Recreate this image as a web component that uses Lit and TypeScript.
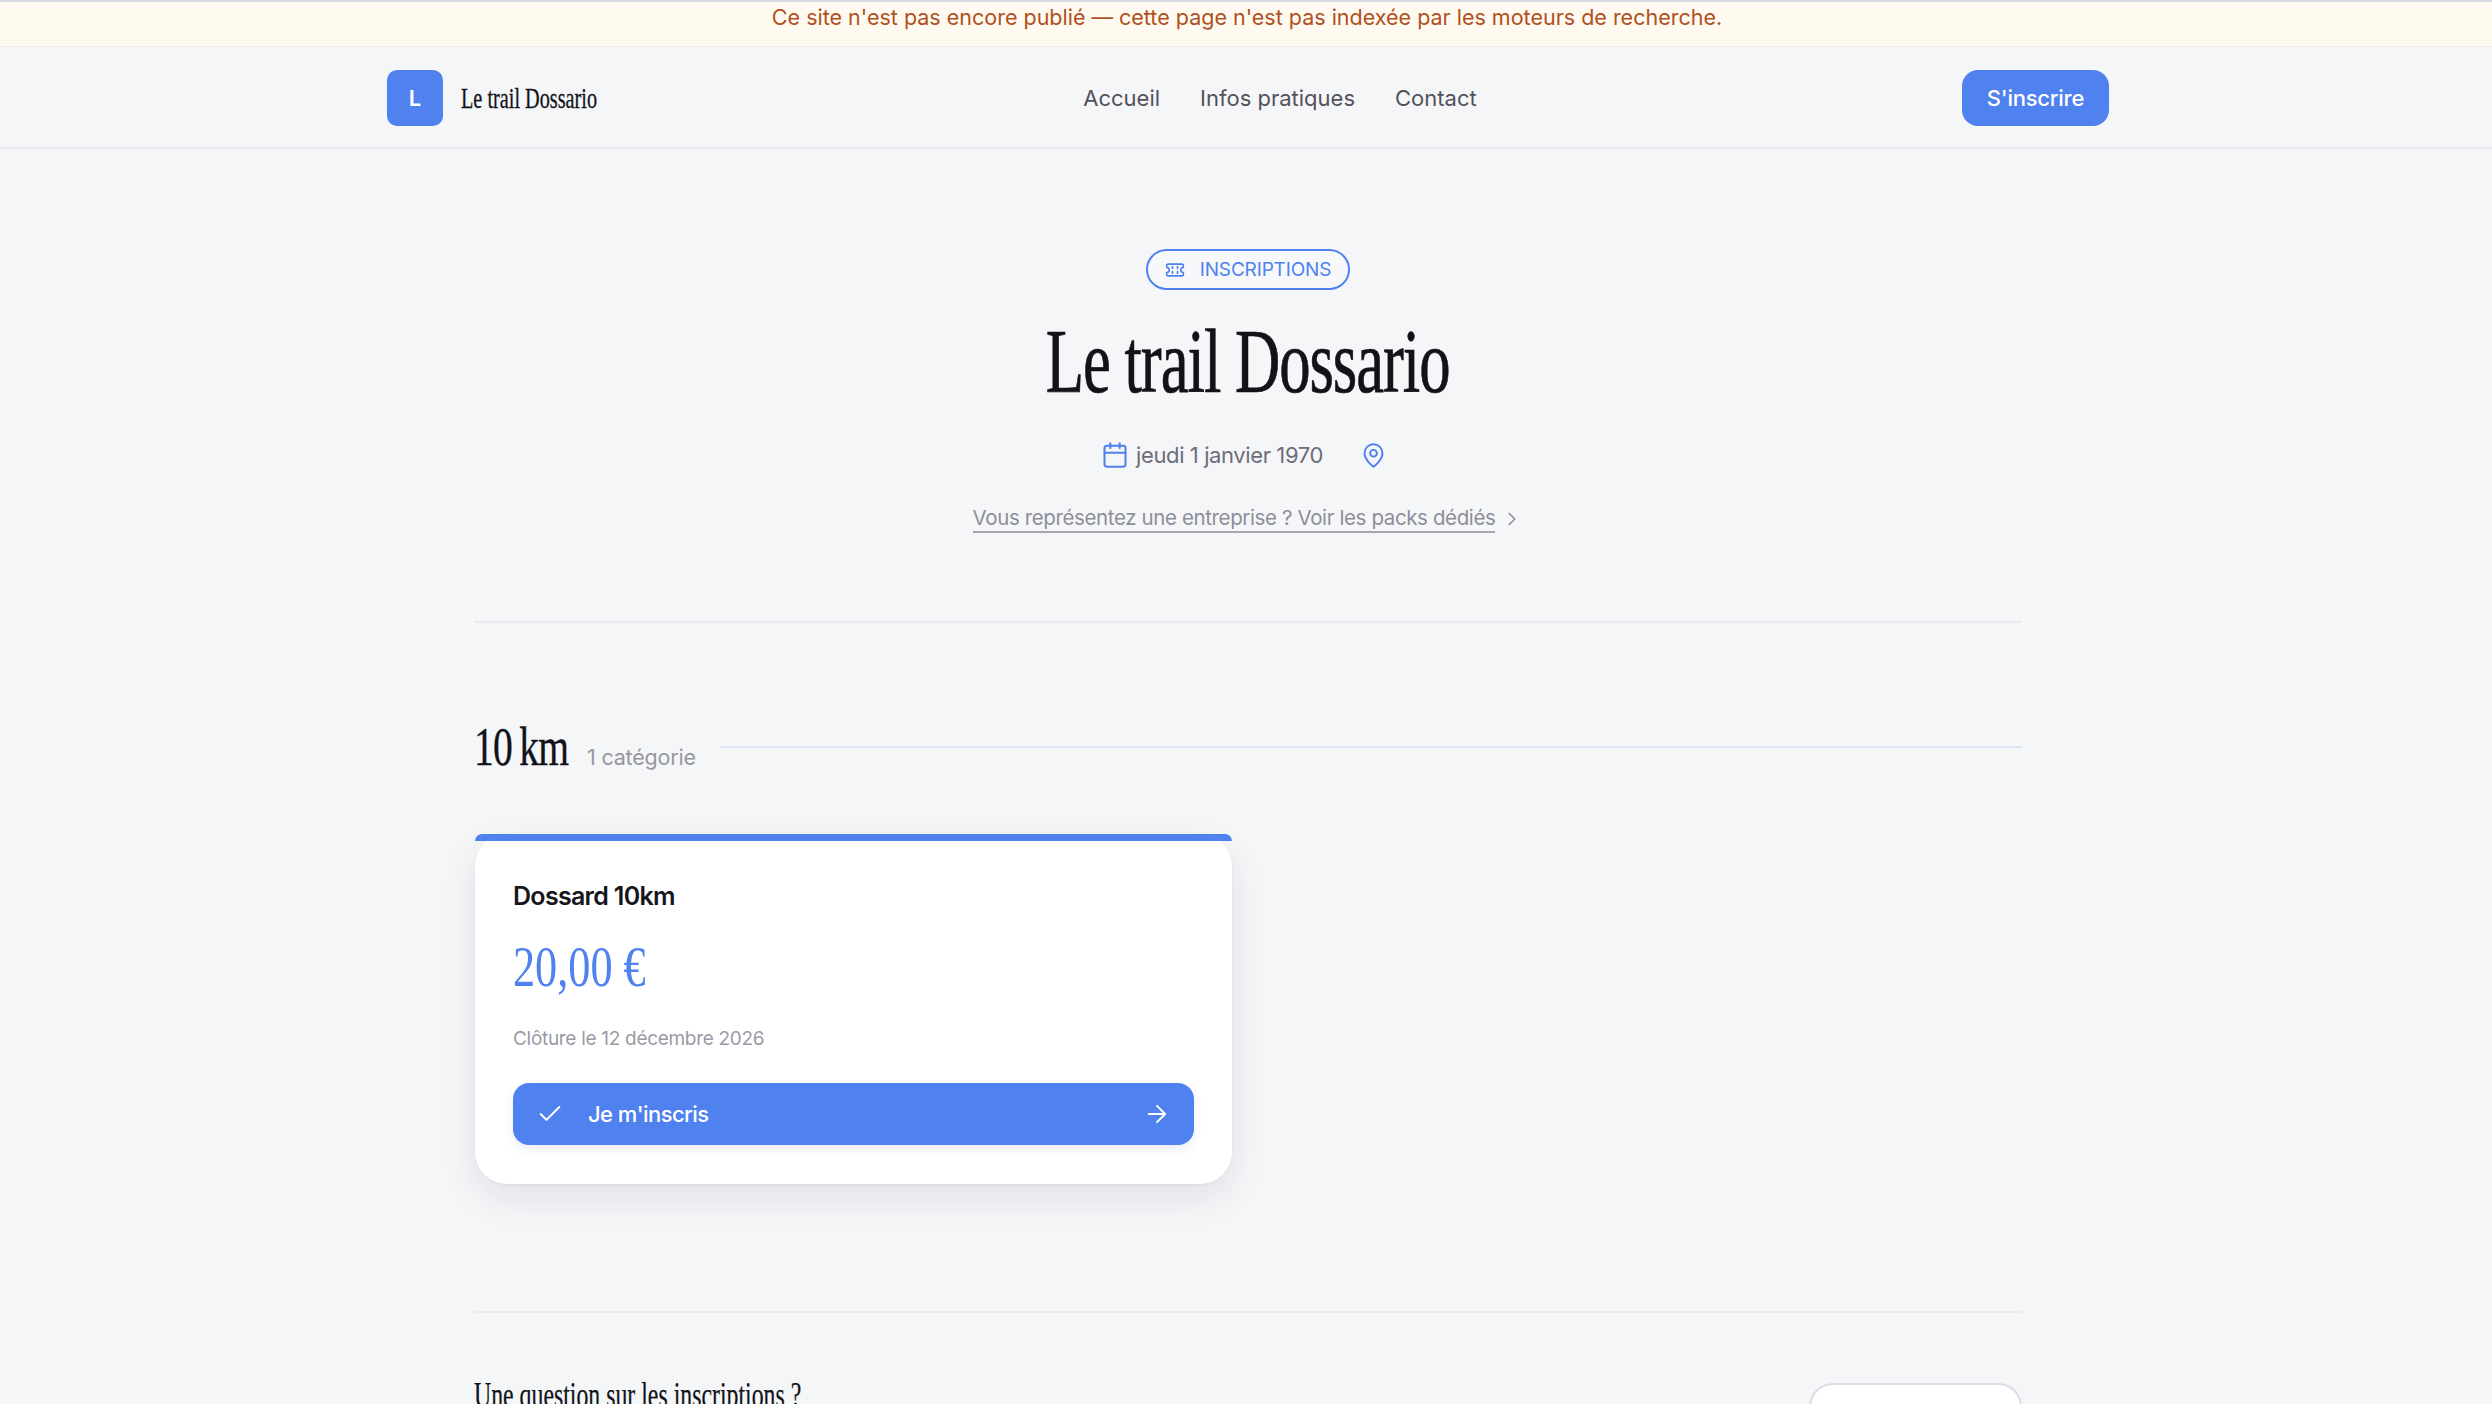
import { LitElement, html, css, svg } from "lit";
import { customElement } from "lit/decorators.js";

const icon = (cls: string, body: unknown) => html`<svg class=${cls} viewBox="0 0 24 24" fill="none" stroke="currentColor" stroke-linecap="round" stroke-linejoin="round">${body}</svg>`;
const ticket = svg`<path d="M2 9a3 3 0 0 1 0 6v2a2 2 0 0 0 2 2h16a2 2 0 0 0 2-2v-2a3 3 0 0 1 0-6V7a2 2 0 0 0-2-2H4a2 2 0 0 0-2 2Z"/><path d="M9 8v2M9 14v2M15 8v2M15 14v2"/>`;
const calendar = svg`<path d="M8 2v4M16 2v4"/><rect x="3" y="4" width="18" height="18" rx="2"/><path d="M3 10h18"/>`;
const pin = svg`<path d="M20 10c0 6-8 12-8 12s-8-6-8-12a8 8 0 0 1 16 0Z"/><circle cx="12" cy="10" r="3"/>`;
const chevron = svg`<path d="m9 18 6-6-6-6"/>`;
const check = svg`<path d="M20 6 9 17l-5-5"/>`;
const arrow = svg`<path d="M5 12h14M12 5l7 7-7 7"/>`;

@customElement("app-root")
export class AppRoot extends LitElement {
  static styles = css`
    :host { display: block; background: #f5f6f8; height: 1404px; font-family: "Inter", "Liberation Sans", sans-serif; color: #111318; overflow: hidden; }
    * { box-sizing: border-box; }
    .serif { font-family: "Liberation Serif", serif; font-weight: 400; display: inline-block; white-space: nowrap; }
    .banner { height: 47px; background: #fffaf0; border-top: 2px solid #d8dae2; border-bottom: 1px solid #eeeee8; display: flex; justify-content: center; color: #b0501f; font-size: 21.5px; line-height: 30px; letter-spacing: 0; padding-left: 2px; }
    .nav { height: 102px; border-bottom: 2px solid #e9eaee; padding: 1px 383px 0 387px; display: flex; justify-content: space-between; align-items: center; }
    .brand { display: flex; align-items: center; gap: 18px; }
    .logo { width: 56px; height: 56px; border-radius: 10px; background: #4f81ef; color: #fff; font-size: 22px; font-weight: 600; display: flex; align-items: center; justify-content: center; }
    .brand-name { width: 137px; font-size: 30px; letter-spacing: 0; transform: scaleX(0.675); transform-origin: left center; color: #111318; -webkit-text-stroke: 0.3px #111318; }
    .links { display: flex; gap: 40px; font-size: 22px; color: #52525c; letter-spacing: 0; }
    .cta { width: 147px; height: 56px; border-radius: 16px; background: #4f81ef; color: #fff; font-size: 22px; font-weight: 500; display: flex; align-items: center; justify-content: center; letter-spacing: -0.25px; }
    .page { width: 1548px; margin-left: 474px; }
    .hero { height: 474px; border-bottom: 2px solid #e9eaee; display: flex; flex-direction: column; align-items: center; padding-top: 100px; }
    .pill { width: 204px; height: 41px; border: 2px solid #4f81ef; border-radius: 21px; color: #4f81ef; display: flex; align-items: center; justify-content: center; gap: 15px; font-size: 19px; font-weight: 400; letter-spacing: -0.15px; background: #f7f8fa; }
    .i-ticket { width: 20px; height: 20px; stroke-width: 2; }
    .title { font-size: 90px; line-height: 100px; margin: 22px 0 0; transform: scaleX(0.697); letter-spacing: -1.5px; color: #111318; -webkit-text-stroke: 0.7px #111318; }
    .meta { display: flex; align-items: center; margin-top: 26px; height: 34px; font-size: 22px; color: #6d6d78; letter-spacing: -0.4px; }
    .i-cal { width: 28px; height: 28px; stroke-width: 1.75; color: #4f81ef; margin-right: 7px; }
    .i-pin { width: 27px; height: 27px; stroke-width: 1.75; color: #4f81ef; margin: 0 8px 0 37px; }
    .corp { display: flex; align-items: center; gap: 6px; margin-top: 33px; font-size: 20.5px; color: #8e8e9a; letter-spacing: -0.38px; }
    .corp span { border-bottom: 2px solid #a6a6b0; line-height: 26px; }
    .i-chev { width: 22px; height: 22px; stroke-width: 1.8; }
    .sec-head { display: flex; align-items: center; margin-top: 94px; height: 60px; }
    .sec-title { font-size: 55px; line-height: 60px; width: 95px; margin: 0; letter-spacing: -1px; word-spacing: -3px; transform: scaleX(0.72); transform-origin: left center; -webkit-text-stroke: 0.4px #111318; }
    .sec-sub { margin-left: 18px; font-size: 21.5px; color: #9696a2; letter-spacing: -0.2px; padding-top: 20px; width: 108px; white-space: nowrap; }
    .sec-line { flex: 1; margin-left: 25px; height: 2px; background: #dbe5f8; }
    .card { position: relative; margin: 57px 0 0 1px; width: 757px; height: 350px; background: #fff; border-radius: 32px; box-shadow: 0 14px 36px rgba(20, 24, 40, 0.09), 0 1px 3px rgba(20, 24, 40, 0.05); padding: 47px 38px 0; }
    .card::before { content: ""; position: absolute; left: 0; right: 0; top: 0; height: 7px; background: #4f81ef; border-radius: 8px 8px 0 0; }
    .card-title { font-size: 25px; font-weight: 600; line-height: 30px; letter-spacing: -0.7px; color: #15161c; }
    .price { display: block; width: 132px; font-size: 56px; line-height: 60px; margin-top: 26px; color: #4f81ef; transform: scaleX(0.79); transform-origin: left center; }
    .close { margin-top: 28px; font-size: 19px; line-height: 28px; color: #9a9aa6; letter-spacing: -0.3px; }
    .go { margin-top: 30px; height: 62px; border-radius: 16px; background: #4f81ef; color: #fff; display: flex; align-items: center; padding: 0 23px; font-size: 22px; font-weight: 500; letter-spacing: -0.55px; box-shadow: 0 4px 10px rgba(40, 70, 140, 0.1); }
    .i-check { width: 28px; height: 28px; stroke-width: 1.7; margin-right: 24px; }
    .go span { flex: 1; }
    .i-arrow { width: 28px; height: 28px; stroke-width: 1.7; }
    .foot { margin-top: 127px; border-top: 2px solid #e9eaee; display: flex; justify-content: space-between; padding-top: 70px; }
    .foot-title { font-size: 35px; line-height: 40px; transform: scaleX(0.68); transform-origin: left center; width: 330px; margin-top: -7px; -webkit-text-stroke: 0.25px #111318; }
    .foot-btn { width: 213px; height: 62px; background: #fff; border: 2px solid #dcdde6; border-radius: 24px; }
  `;

  render() {
    return html`
      <div class="banner">Ce site n'est pas encore publié — cette page n'est pas indexée par les moteurs de recherche.</div>
      <header class="nav">
        <div class="brand"><div class="logo">L</div><span class="serif brand-name">Le trail Dossario</span></div>
        <nav class="links"><span>Accueil</span><span>Infos pratiques</span><span>Contact</span></nav>
        <div class="cta">S'inscrire</div>
      </header>
      <main class="page">
        <section class="hero">
          <div class="pill">${icon("i-ticket", ticket)}<span>INSCRIPTIONS</span></div>
          <h1 class="serif title">Le trail Dossario</h1>
          <div class="meta">${icon("i-cal", calendar)}<span>jeudi 1 janvier 1970</span>${icon("i-pin", pin)}</div>
          <div class="corp"><span>Vous représentez une entreprise ? Voir les packs dédiés</span>${icon("i-chev", chevron)}</div>
        </section>
        <div class="sec-head">
          <h2 class="serif sec-title">10 km</h2>
          <div class="sec-sub">1 catégorie</div>
          <div class="sec-line"></div>
        </div>
        <article class="card">
          <div class="card-title">Dossard 10km</div>
          <div class="serif price">20,00 €</div>
          <div class="close">Clôture le 12 décembre 2026</div>
          <div class="go">${icon("i-check", check)}<span>Je m'inscris</span>${icon("i-arrow", arrow)}</div>
        </article>
        <div class="foot">
          <div class="serif foot-title">Une question sur les inscriptions ?</div>
          <div class="foot-btn"></div>
        </div>
      </main>
    `;
  }
}
